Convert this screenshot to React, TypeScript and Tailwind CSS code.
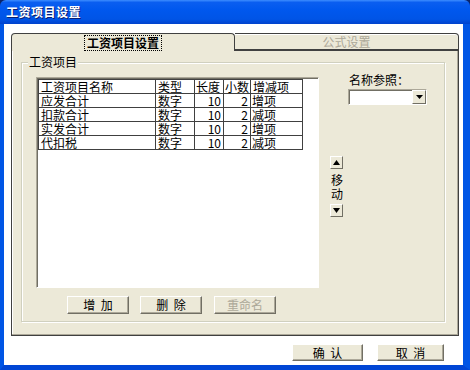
import React from "react";

const font = { fontFamily: '"Noto Sans CJK SC", "Liberation Sans", sans-serif' };

function Btn({ children, disabled, className = "" }: { children: React.ReactNode; disabled?: boolean; className?: string }) {
  return (
    <div
      className={`flex items-center justify-center bg-[#ECE9D8] border border-t-white border-l-white border-r-[#716F64] border-b-[#716F64] shadow-[inset_-1px_-1px_0_#ACA899] text-[12px] leading-none ${
        disabled ? "text-[#ACA899]" : "text-black"
      } ${className}`}
    >
      {children}
    </div>
  );
}

function Tri({ up }: { up?: boolean }) {
  return (
    <div className="w-[13px] h-[13px] flex items-center justify-center bg-[#ECE9D8] border border-t-white border-l-white border-r-[#716F64] border-b-[#716F64]">
      <svg width="7" height="5" viewBox="0 0 7 5">
        {up ? <polygon points="3.5,0 7,5 0,5" fill="#000" /> : <polygon points="0,0 7,0 3.5,5" fill="#000" />}
      </svg>
    </div>
  );
}

const rows = [
  ["应发合计", "数字", "10", "2", "增项"],
  ["扣款合计", "数字", "10", "2", "减项"],
  ["实发合计", "数字", "10", "2", "增项"],
  ["代扣税", "数字", "10", "2", "减项"],
];

const cell = "p-0 h-[14px] border border-[#404040] whitespace-nowrap";

export default function App() {
  return (
    <div className="w-[470px] h-[370px] flex flex-col overflow-hidden bg-[#0A246A]" style={font}>
      {/* title bar */}
      <div className="h-[24px] shrink-0 flex items-center pl-[6px] rounded-t-[6px] bg-[linear-gradient(to_bottom,#3D8DFF_0%,#0A5EF0_10%,#0058EE_40%,#0054E6_80%,#0042CC_100%)]">
        <span className="text-white text-[12px] font-bold tracking-[0.5px] [text-shadow:1px_1px_0_#0A1F70]">工资项目设置</span>
      </div>
      {/* body */}
      <div className="flex-1 flex flex-col bg-white border-l-[4px] border-r-[7px] border-b-[5px] border-l-[#0055E5] border-r-[#0055E5] border-b-[#0046D5]">
        {/* tab control */}
        <div className="ml-[7px] mt-[9px] w-[448px] flex flex-col">
          <div className="h-[17px] flex">
            <div className="w-[224px] h-[18px] -mb-[1px] z-10 flex items-center justify-center bg-[#ECE9D8] border border-b-0 border-[#404040] rounded-t-[4px]">
              <span className="text-[12px] font-bold leading-none px-[2px] py-[1px] border border-dotted border-black">工资项目设置</span>
            </div>
            <div className="w-[224px] h-[17px] flex items-center justify-center bg-[#ECE9D8] border border-l-0 border-[#404040] rounded-tr-[4px] shadow-[inset_0_1px_0_#fff]">
              <span className="text-[12px] leading-none text-[#ACA899]">公式设置</span>
            </div>
          </div>
          <div className="h-[286px] bg-[#ECE9D8] border border-[#404040] shadow-[inset_-1px_-1px_0_#ACA899,inset_1px_0_0_#fff] pt-[11px] pl-[9px]">
            {/* group box */}
            <div className="relative w-[424px] h-[260px] border border-[#D0D0BF] shadow-[1px_1px_0_#fff,inset_1px_1px_0_#fff] flex">
              <span className="absolute left-[6px] -top-[8px] px-[1px] bg-[#ECE9D8] text-[12px] leading-[14px]">工资项目</span>
              <div className="flex flex-col pl-[14px] pt-[14px]">
                {/* list */}
                <div className="w-[283px] h-[211px] bg-white border border-t-[#ACA899] border-l-[#ACA899] border-r-white border-b-white shadow-[inset_1px_1px_0_#716F64]">
                  <table className="ml-[1px] mt-[1px] w-[264px] table-fixed border-collapse text-[12px] leading-[13px] text-black" style={font}>
                    <colgroup>
                      <col className="w-[117px]" />
                      <col className="w-[39px]" />
                      <col className="w-[29px]" />
                      <col className="w-[27px]" />
                      <col className="w-[52px]" />
                    </colgroup>
                    <thead>
                      <tr>
                        {["工资项目名称", "类型", "长度", "小数", "增减项"].map((h, i) => (
                          <th key={h} className={`${cell} font-normal text-left ${i === 2 || i === 3 ? "pl-[1px]" : "pl-[2px]"}`}>
                            {h}
                          </th>
                        ))}
                      </tr>
                    </thead>
                    <tbody>
                      {rows.map((r) => (
                        <tr key={r[0]}>
                          <td className={`${cell} pl-[2px]`}>{r[0]}</td>
                          <td className={`${cell} pl-[2px]`}>{r[1]}</td>
                          <td className={`${cell} text-right pr-[2px]`}>{r[2]}</td>
                          <td className={`${cell} text-right pr-[2px]`}>{r[3]}</td>
                          <td className={`${cell} pl-[1px]`}>{r[4]}</td>
                        </tr>
                      ))}
                    </tbody>
                  </table>
                </div>
                {/* buttons */}
                <div className="flex mt-[8px] ml-[31px] gap-[11px]">
                  <Btn className="w-[62px] h-[18px]">增&nbsp;&nbsp;加</Btn>
                  <Btn className="w-[62px] h-[18px]">删&nbsp;&nbsp;除</Btn>
                  <Btn disabled className="w-[62px] h-[18px] ml-[1px]">重命名</Btn>
                </div>
              </div>
              {/* right column */}
              <div className="flex flex-col ml-[11px] pt-[10px]">
                <div className="ml-[19px] text-[12px] leading-[14px]">名称参照：</div>
                <div className="ml-[18px] mt-[2px] w-[79px] h-[16px] flex bg-white border border-t-[#ACA899] border-l-[#ACA899] border-r-white border-b-white shadow-[inset_1px_1px_0_#716F64]">
                  <div className="flex-1" />
                  <div className="w-[14px] h-[14px] flex items-center justify-center bg-[#ECE9D8] border border-t-white border-l-white border-r-[#716F64] border-b-[#716F64]">
                    <svg width="7" height="4" viewBox="0 0 7 4">
                      <polygon points="0,0 7,0 3.5,4" fill="#000" />
                    </svg>
                  </div>
                </div>
                <div className="mt-[51px] flex flex-col items-start">
                  <Tri up />
                  <div className="mt-[4px] ml-[1px] w-[13px] text-[12px] leading-[14px] flex flex-col">
                    <span>移</span>
                    <span>动</span>
                  </div>
                  <div className="mt-[3px]">
                    <Tri />
                  </div>
                </div>
              </div>
            </div>
          </div>
        </div>
        {/* dialog buttons */}
        <div className="flex mt-[8px] ml-[288px] gap-[14px]">
          <Btn className="w-[71px] h-[17px]">确&nbsp;&nbsp;认</Btn>
          <Btn className="w-[67px] h-[17px]">取&nbsp;&nbsp;消</Btn>
        </div>
      </div>
    </div>
  );
}
